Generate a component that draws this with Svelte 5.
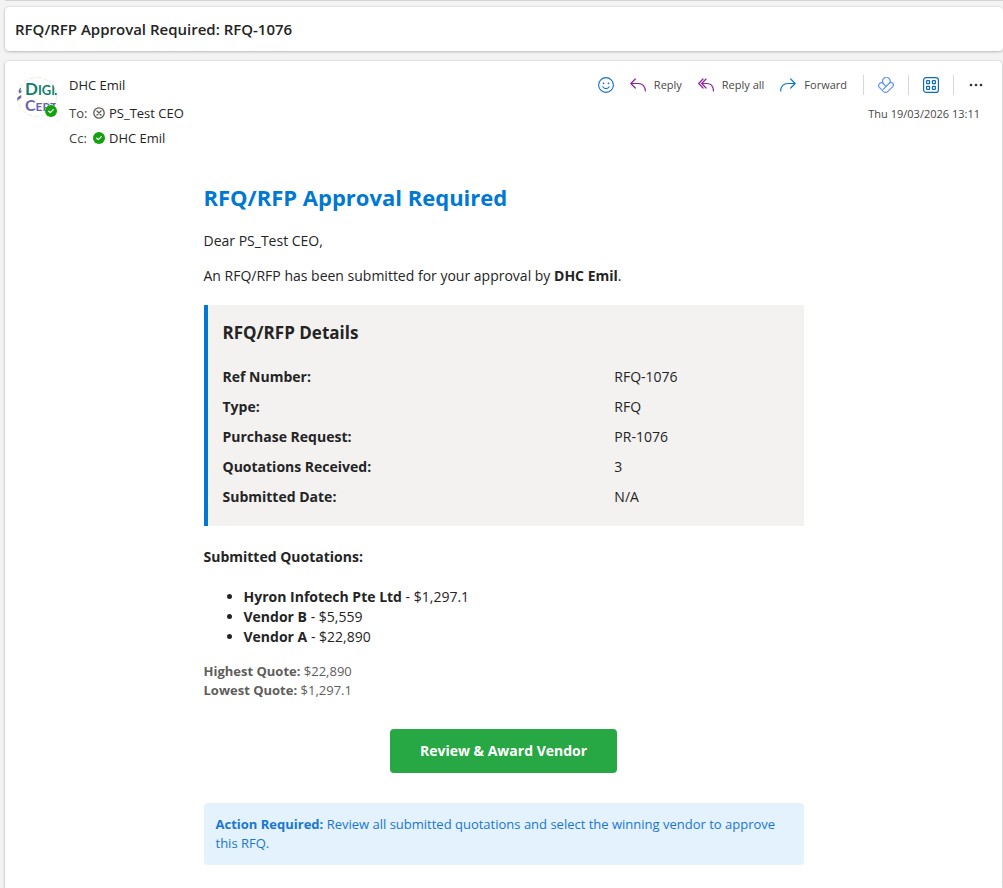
<script>
  const details = [
    ['Ref Number:', 'RFQ-1076'],
    ['Type:', 'RFQ'],
    ['Purchase Request:', 'PR-1076'],
    ['Quotations Received:', '3'],
    ['Submitted Date:', 'N/A']
  ];

  const quotations = [
    { vendor: 'Hyron Infotech Pte Ltd', amount: '$1,297.1' },
    { vendor: 'Vendor B', amount: '$5,559' },
    { vendor: 'Vendor A', amount: '$22,890' }
  ];
</script>

{#snippet available(size)}
  <svg class="presence" width={size} height={size} viewBox="0 0 12 12" aria-hidden="true">
    <circle cx="6" cy="6" r="6" fill="#13a10e" />
    <path d="M3.8 6.2 5.3 7.6 8.3 4.6" fill="none" stroke="#fff" stroke-width="1.3" stroke-linecap="round" stroke-linejoin="round" />
  </svg>
{/snippet}

<div class="page">
  <div class="toolbar-edge"></div>

  <header class="card subject">
    <h1>RFQ/RFP Approval Required: RFQ-1076</h1>
  </header>

  <main class="card message">
    <div class="head">
      <div class="avatar">
        <svg width="40" height="40" viewBox="0 0 40 40" aria-hidden="true">
          <defs><clipPath id="avatar-clip"><circle cx="20" cy="20" r="20" /></clipPath></defs>
          <circle cx="20" cy="20" r="19.5" fill="#fff" stroke="#e6eedc" stroke-dasharray="5 2" />
          <g clip-path="url(#avatar-clip)" font-family="Lato, sans-serif" font-weight="700">
            <path d="M1.500 14l1.500-3 1 0-.5 3 1.500-.5-1 2-1.500 1zM0 22l1-2 3-2 .5 2-1.500 2-1.500.5-1 2z" fill="#6866ae" />
            <text x="8" y="18" font-size="17" fill="#11806a">D<tspan font-size="13">IGI</tspan></text>
            <rect x="38" y="16" width="2" height="2" fill="#11806a" />
            <text x="8" y="34" font-size="16" fill="#6866ae">C<tspan font-size="12">ERT</tspan></text>
          </g>
        </svg>
        <span class="badge">{@render available(12)}</span>
      </div>

      <div class="people">
        <div class="sender">DHC Emil</div>
        <div class="line">
          <span class="label">To:</span>
          <svg width="12" height="12" viewBox="0 0 12 12" fill="none" stroke="#5c5a58" aria-hidden="true">
            <circle cx="6" cy="6" r="5.2" stroke-width="1.3" />
            <path d="M4 4l4 4M8 4l-4 4" stroke-width="1.3" stroke-linecap="round" />
          </svg>
          <span>PS_Test CEO</span>
        </div>
        <div class="line">
          <span class="label">Cc:</span>
          {@render available(12)}
          <span>DHC Emil</span>
        </div>
      </div>

      <div class="side">
        <div class="actions">
          <button class="icon-only" aria-label="React">
            <svg width="16" height="16" viewBox="0 0 16 16" fill="none" stroke="#1170c8" aria-hidden="true">
              <circle cx="8" cy="8" r="7.4" stroke-width="1.1" />
              <path d="M4.8 9.8a3.7 3.7 0 0 0 6.4 0" stroke-width="1.1" stroke-linecap="round" />
              <circle cx="5.5" cy="6.3" r="0.9" fill="#1170c8" stroke="none" />
              <circle cx="10.5" cy="6.3" r="0.9" fill="#1170c8" stroke="none" />
            </svg>
          </button>
          <button>
            <svg width="16" height="14" viewBox="0 0 16 14" fill="none" stroke="#8f1fa0" stroke-width="1.2" stroke-linecap="round" stroke-linejoin="round" aria-hidden="true">
              <path d="M5.3 1 .8 5.5l4.5 4.5M1 5.5h7.2c4 0 6.8 2.8 7.2 7.5" />
            </svg>
            Reply
          </button>
          <button>
            <svg width="16" height="14" viewBox="0 0 16 14" fill="none" stroke="#8f1fa0" stroke-width="1.2" stroke-linecap="round" stroke-linejoin="round" aria-hidden="true">
              <path d="M5 1 .7 5.5 5 10M8 1 3.7 5.5 8 10M4 5.5h5.2c3.7 0 6 2.8 6.3 7.5" />
            </svg>
            Reply all
          </button>
          <button>
            <svg width="16" height="14" viewBox="0 0 16 14" fill="none" stroke="#0a7ad6" stroke-width="1.2" stroke-linecap="round" stroke-linejoin="round" aria-hidden="true">
              <path d="M10.7 1l4.5 4.5-4.5 4.500M15 5.500H7.800C3.800 5.500 1 8.300.6 13" />
            </svg>
            Forward
          </button>
          <div class="apps">
            <span class="divider"></span>
            <button class="icon-only" aria-label="Loop">
              <svg width="16" height="16" viewBox="0 0 16 16" fill="none" stroke="#6196f5" stroke-width="1.2" stroke-linejoin="round" stroke-linecap="round" aria-hidden="true">
                <path d="M5.500 6.500A3.700 3.700 0 1 1 11.300 6.300L8 9.500 5.200 6.700C4 5.500 2.500 5.600 1.500 6.600c-1.200 1.200-1.100 2.700-.1 3.800l3.900 4c1.400 1.300 3.300 1.300 4.600 0l4.600-4.600c1.100-1.200 1.100-2.700.1-3.700-1-.9-2.300-.8-3.300.2L5.300 12.200" />
              </svg>
            </button>
            <span class="divider"></span>
            <button class="icon-only" aria-label="Apps">
              <svg width="16" height="16" viewBox="0 0 16 16" fill="none" stroke="#0f6cbd" stroke-width="1.2" aria-hidden="true">
                <rect x=".6" y=".6" width="14.800" height="14.800" rx="2.500" />
                <rect x="3.600" y="3.600" width="3" height="3" rx=".6" />
                <rect x="9.400" y="3.600" width="3" height="3" rx=".6" />
                <rect x="3.600" y="9.400" width="3" height="3" rx=".6" />
                <rect x="9.400" y="9.400" width="3" height="3" rx=".6" />
              </svg>
            </button>
            <span class="divider"></span>
            <button class="icon-only" aria-label="More actions">
              <svg width="14" height="4" viewBox="0 0 14 4" fill="#323130" aria-hidden="true">
                <circle cx="2" cy="2" r="1.300" /><circle cx="7" cy="2" r="1.300" /><circle cx="12" cy="2" r="1.300" />
              </svg>
            </button>
          </div>
        </div>
        <time datetime="2026-03-19T13:11">Thu 19/03/2026 13:11</time>
      </div>
    </div>

    <article class="body">
      <h2>RFQ/RFP Approval Required</h2>
      <p>Dear PS_Test CEO,</p>
      <p>An RFQ/RFP has been submitted for your approval by <strong>DHC Emil</strong>.</p>

      <section class="details">
        <h3>RFQ/RFP Details</h3>
        <table>
          <tbody>
            {#each details as [name, value]}
              <tr><th scope="row">{name}</th><td>{value}</td></tr>
            {/each}
          </tbody>
        </table>
      </section>

      <h4>Submitted Quotations:</h4>
      <ul>
        {#each quotations as q}
          <li><strong>{q.vendor}</strong> - {q.amount}</li>
        {/each}
      </ul>

      <div class="range">
        <div><strong>Highest Quote:</strong> $22,890</div>
        <div><strong>Lowest Quote:</strong> $1,297.1</div>
      </div>

      <div class="cta"><a href="#review">Review &amp; Award Vendor</a></div>

      <div class="notice">
        <strong>Action Required:</strong> Review all submitted quotations and select the winning vendor to approve this RFQ.
      </div>
    </article>
  </main>
</div>

<style>
  :global(body) {
    margin: 0;
    background: #f3f3f3;
  }

  .page {
    box-sizing: border-box;
    min-height: 100vh;
    display: flex;
    flex-direction: column;
    overflow: hidden;
    background: #f3f3f3;
    color: #242424;
    font-family: 'Open Sans', sans-serif;
    font-size: 14px;
    line-height: 20px;
  }

  .toolbar-edge {
    height: 1px;
    margin: 0 0 6px 5px;
    background: #d4d4d4;
  }

  .card {
    background: #fff;
    border-radius: 4px;
    box-shadow: 0 0 2px rgba(0, 0, 0, 0.16), 0 1px 3px rgba(0, 0, 0, 0.2);
  }

  .subject {
    margin: 0 0 10px 5px;
    padding: 12px 10px;
  }

  h1 {
    margin: 0;
    font-size: 15px;
    line-height: 20px;
    font-weight: 600;
  }

  .message {
    flex: 1;
    margin: 0 1px 0 5px;
    border-radius: 4px 4px 0 0;
    padding-bottom: 23px;
  }

  .head {
    display: flex;
    gap: 12px;
    padding: 12px 18px 0 12px;
  }

  .avatar {
    position: relative;
    width: 40px;
    height: 40px;
    margin-top: 4px;
  }

  .avatar svg,
  .presence {
    display: block;
  }

  .badge {
    position: absolute;
    right: 0;
    bottom: 0;
    border-radius: 50%;
    background: #fff;
  }

  .people {
    flex: 1;
    font-size: 13px;
    line-height: 24px;
    padding-bottom: 32px;
  }

  .sender {
    margin-bottom: 3px;
  }

  .line {
    display: flex;
    align-items: center;
    gap: 4px;
    height: 25px;
  }

  .label {
    width: 20px;
    color: #424242;
  }

  .side {
    display: flex;
    flex-direction: column;
    align-items: flex-end;
    color: #484644;
    font-size: 11px;
  }

  .actions {
    display: flex;
    align-items: center;
    gap: 16px;
    height: 24px;
  }

  .apps {
    display: flex;
    align-items: center;
    gap: 14px;
  }

  button {
    display: flex;
    align-items: center;
    gap: 8px;
    padding: 0;
    border: 0;
    background: none;
    color: inherit;
    font: inherit;
  }

  .icon-only {
    min-width: 16px;
    justify-content: center;
  }

  .divider {
    width: 1px;
    height: 20px;
    background: #d8d8d8;
  }

  time {
    margin: 7px 4px 0 0;
    line-height: 20px;
  }

  .body {
    max-width: 600px;
    margin: 0 auto;
  }

  h2 {
    margin: 0;
    color: #0078d4;
    font-size: 22px;
    line-height: 30px;
    font-weight: 700;
  }

  p {
    margin: 15px 0;
  }

  h2 + p {
    margin-top: 19px;
  }

  .details {
    margin: 19px 0 21px;
    padding: 15px 15px 14px;
    border-left: 4px solid #0078d4;
    background: #f3f2f1;
  }

  h3 {
    margin: 0 0 17px;
    font-size: 17px;
    line-height: 25px;
  }

  table {
    width: 100%;
    border-collapse: collapse;
  }

  th,
  td {
    padding: 5px 0;
    text-align: left;
  }

  th {
    width: calc(100% * 9 / 13);
  }

  h4 {
    margin: 0 0 20px;
    font-size: 14px;
  }

  ul {
    margin: 0 0 15px;
    padding-left: 40px;
  }

  .range {
    color: #605e5c;
    font-size: 13px;
    line-height: 19px;
  }

  .cta {
    display: flex;
    justify-content: center;
    margin: 29px 0 30px;
  }

  .cta a {
    padding: 12px 30px;
    border-radius: 4px;
    background: #28a745;
    color: #fff;
    font-weight: 700;
    text-decoration: none;
  }

  .notice {
    padding: 12px;
    border-radius: 4px;
    background: #e3f2fd;
    color: #1976d2;
    font-size: 13px;
    line-height: 19px;
  }
</style>
